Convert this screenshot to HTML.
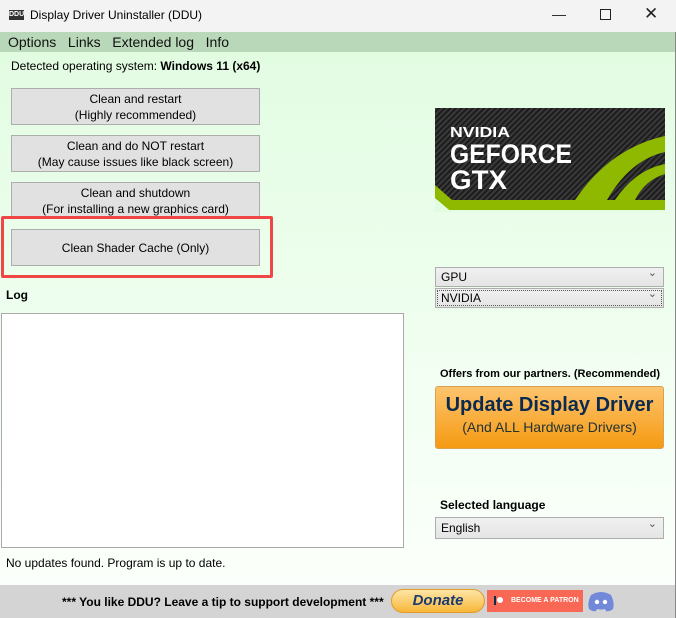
<!DOCTYPE html><html><head><style>
body{margin:0;width:676px;height:618px;position:relative;overflow:hidden;font-family:"Liberation Sans",sans-serif;font-size:12px;color:#000;background:#fff}
.a{position:absolute}
.btn{position:absolute;left:11px;width:249px;background:#e1e1e1;border:1px solid #adadad;text-align:center;font-size:12px;line-height:16px;box-sizing:border-box;display:flex;align-items:center;justify-content:center;flex-direction:column}
.cb{position:absolute;left:435px;width:229px;height:20px;box-sizing:border-box;border:1px solid #adadad;background:linear-gradient(#f0f0f0,#e5e5e5);font-size:12px;padding-left:5px;line-height:18px}
.cb:after{content:"⌄";position:absolute;right:6px;top:-4px;font-size:11px;color:#555}
</style></head><body>
<div class="a" style="left:0;top:0;width:676px;height:32px;background:#f3f3f3"></div>
<div class="a" style="left:9px;top:10px;width:15px;height:10px;background:#333;color:#fff;font-size:7px;font-weight:bold;line-height:10px;text-align:center">DDU</div>
<div class="a" style="left:30px;top:8px;font-size:12px">Display Driver Uninstaller (DDU)</div>
<div class="a" style="left:552px;top:6px;font-size:14px;color:#222">—</div>
<div class="a" style="left:600px;top:9px;width:9px;height:9px;border:1px solid #222"></div>
<div class="a" style="left:644px;top:4px;font-size:17px;color:#222">✕</div>
<div class="a" style="left:0;top:32px;width:676px;height:20px;background:#b9d7b9"></div>
<div class="a" style="left:8px;top:34px;font-size:14px;color:#111">Options&nbsp;&nbsp; Links&nbsp;&nbsp; Extended log&nbsp;&nbsp; Info</div>
<div class="a" style="left:0;top:52px;width:675px;height:533px;background:linear-gradient(#e2fce2,#f4fff4 70%,#fbfffb)"></div>
<div class="a" style="left:675px;top:32px;width:1px;height:586px;background:#888"></div>
<div class="a" style="left:11px;top:59px">Detected operating system: <b>Windows 11 (x64)</b></div>
<div class="btn" style="top:88px;height:37px"><div>Clean and restart</div><div>(Highly recommended)</div></div>
<div class="btn" style="top:135px;height:37px"><div>Clean and do NOT restart</div><div>(May cause issues like black screen)</div></div>
<div class="btn" style="top:182px;height:37px"><div>Clean and shutdown</div><div>(For installing a new graphics card)</div></div>
<div class="btn" style="top:229px;height:37px"><div>Clean Shader Cache (Only)</div></div>
<div class="a" style="left:1px;top:216px;width:266px;height:56px;border:3px solid #ef4646;border-radius:2px"></div>
<div class="a" style="left:6px;top:288px;font-weight:bold">Log</div>
<div class="a" style="left:1px;top:313px;width:403px;height:235px;background:#fff;border:1px solid #aaa;box-sizing:border-box"></div>
<div class="a" style="left:6px;top:556px">No updates found. Program is up to date.</div>
<svg class="a" style="left:435px;top:108px" width="230" height="104">
<defs><pattern id="p" width="4" height="4" patternUnits="userSpaceOnUse" patternTransform="rotate(45)"><rect width="4" height="4" fill="#1c1c1c"/><rect width="2" height="4" fill="#3a3a3a"/></pattern></defs>
<rect width="230" height="92" fill="url(#p)"/>
<path d="M140,92 Q175,40 230,28 L230,44 Q195,52 172,92Z" fill="#8fb800"/>
<path d="M180,92 Q200,62 230,56 L230,66 Q210,72 200,92Z" fill="#8fb800"/>
<polygon points="0,77 17,92 230,92 230,102 14,102 0,90" fill="#8fb800"/>
<polygon points="0,90 14,102 230,102 230,104 0,104" fill="#e2fce2"/>
<text x="15" y="29" fill="#fff" font-family="Liberation Sans" font-weight="bold" font-size="15" textLength="60" lengthAdjust="spacingAndGlyphs">NVIDIA</text>
<text x="15" y="55" fill="#fff" font-family="Liberation Sans" font-weight="bold" font-size="27" textLength="122" lengthAdjust="spacingAndGlyphs">GEFORCE</text>
<text x="15" y="81" fill="#fff" font-family="Liberation Sans" font-weight="bold" font-size="27" textLength="57" lengthAdjust="spacingAndGlyphs">GTX</text>
</svg>
<div class="cb" style="top:267px">GPU</div>
<div class="cb" style="top:288px;outline:1px dotted #555;outline-offset:-3px">NVIDIA</div>
<div class="a" style="left:440px;top:368px;font-size:11px;font-weight:bold">Offers from our partners. (Recommended)</div>
<div class="a" style="left:435px;top:386px;width:229px;height:63px;box-sizing:border-box;border:1px solid #d9a050;border-radius:3px;background:linear-gradient(#fdc46e,#f59a12);text-align:center;color:#0c2a4e">
<div style="font-size:20px;font-weight:bold;margin-top:7px">Update Display Driver</div>
<div style="font-size:14px;margin-top:2px;color:#233">(And ALL Hardware Drivers)</div></div>
<div class="a" style="left:440px;top:498px;font-weight:bold">Selected language</div>
<div class="cb" style="top:517px;height:22px;line-height:20px">English</div>
<div class="a" style="left:0;top:585px;width:675px;height:33px;background:#d4d4d4"></div>
<div class="a" style="left:62px;top:595px;font-weight:bold">*** You like DDU? Leave a tip to support development ***</div>
<div class="a" style="left:391px;top:589px;width:94px;height:24px;border-radius:12px;background:linear-gradient(#fde6a6,#f8b73a);border:1px solid #e29a2a;box-sizing:border-box;text-align:center;color:#1b3a6f;font-weight:bold;font-style:italic;font-size:15px;line-height:22px">Donate</div>
<div class="a" style="left:487px;top:590px;width:96px;height:22px;background:#f96854;color:#fff;font-size:7px;font-weight:bold;line-height:22px"><span style="display:inline-block;width:2px;height:9px;background:#052d49;margin:0 1px 0 7px;vertical-align:middle"></span><span style="display:inline-block;width:6px;height:6px;border-radius:50%;background:#fff;vertical-align:middle;margin-right:8px"></span>BECOME A PATRON</div>
<svg class="a" style="left:587px;top:589px" width="28" height="24"><path d="M4,6 Q14,0 24,6 Q28,14 26,20 Q22,23 19,22 L18,20 Q14,21 10,20 L9,22 Q6,23 2,20 Q0,14 4,6Z" fill="#7289da"/><circle cx="10" cy="13" r="2.2" fill="#fff"/><circle cx="18" cy="13" r="2.2" fill="#fff"/></svg>
</body></html>
